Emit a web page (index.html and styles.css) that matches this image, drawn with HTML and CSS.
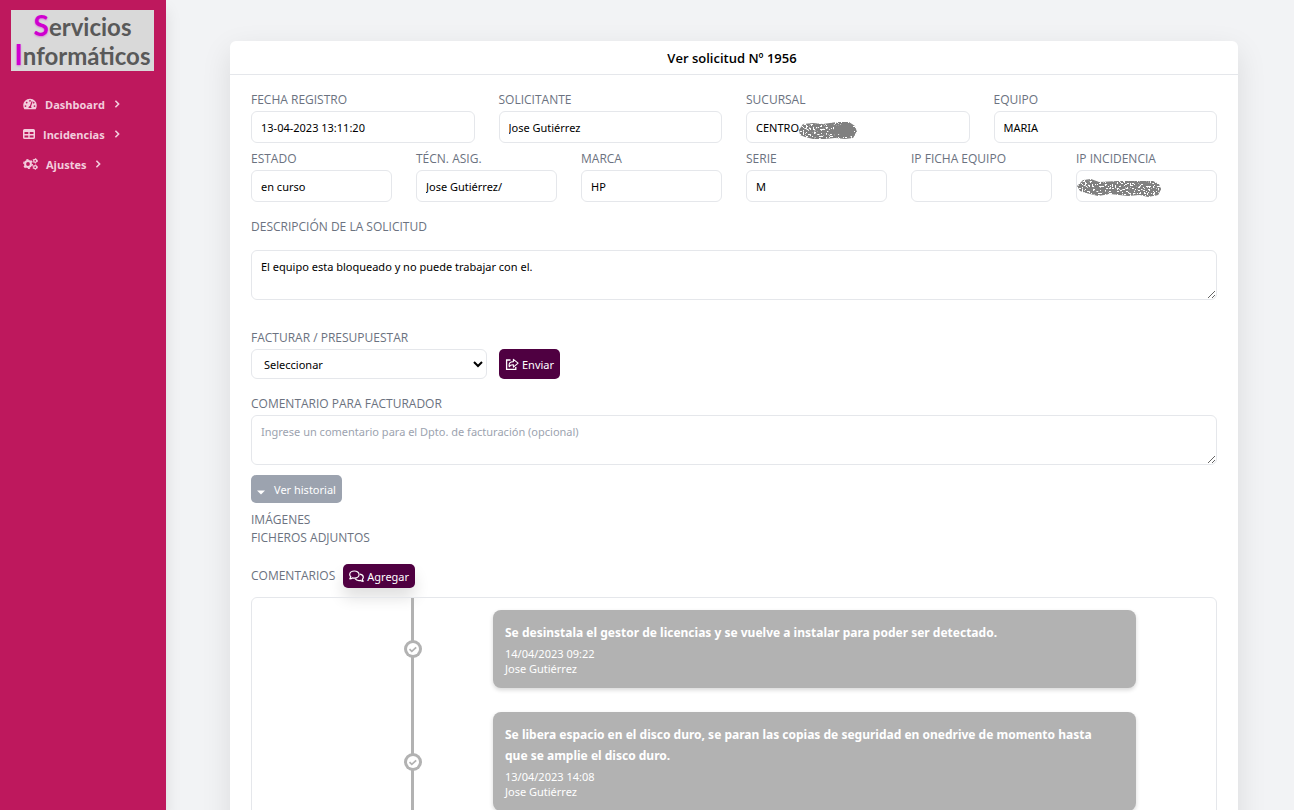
FILE: index.html
```html
<!DOCTYPE html>
<html lang="es">
<head>
<meta charset="utf-8">
<title>Ver solicitud Nº 1956</title>
<link rel="stylesheet" href="styles.css">
</head>
<body>
<div class="app">
  <aside class="sidebar">
    <div class="logo">
      <div class="logo-line"><span class="initial">S</span>ervicios</div>
      <div class="logo-line"><span class="initial">I</span>nformáticos</div>
    </div>
    <nav class="menu">
      <a class="menu-item" href="#">
        <svg class="icon-dash" viewBox="0 0 576 512" fill="currentColor"><path fill-rule="evenodd" d="M288 32C129 32 0 161 0 320c0 53 14 102 39 145 6 9 16 15 27 15h444c11 0 21-6 27-15 25-43 39-92 39-145C576 161 447 32 288 32zm0 50a38 38 0 1 1 0 76 38 38 0 0 1 0-76zM96 384a38 38 0 1 1 0-76 38 38 0 0 1 0 76zm50-150a38 38 0 1 1 0-76 38 38 0 0 1 0 76zm250-62l-66 188c20 14 26 36 18 66H228c-10-44 14-82 56-86l66-186c12-24 54-8 46 18zm36 62a38 38 0 0 1-24-8l22-64a38 38 0 1 1 2 72zm48 150a38 38 0 1 1 0-76 38 38 0 0 1 0 76z"/></svg>
        <span>Dashboard</span>
        <svg class="icon-next" viewBox="0 0 8 10" fill="none" stroke="currentColor" stroke-width="2"><path d="M2 1l4 4-4 4"/></svg>
      </a>
      <a class="menu-item" href="#">
        <svg class="icon-table" viewBox="0 0 12 12" fill="none" stroke="currentColor"><rect x=".75" y="1.75" width="10.5" height="8.5" rx=".8" stroke-width="1.5"/><path d="M1 3h10" stroke-width="2"/><path d="M1 6.8h10M6 3v7.5" stroke-width="1.4"/></svg>
        <span>Incidencias</span>
        <svg class="icon-next" viewBox="0 0 8 10" fill="none" stroke="currentColor" stroke-width="2"><path d="M2 1l4 4-4 4"/></svg>
      </a>
      <a class="menu-item" href="#">
        <svg class="icon-gears" viewBox="0 0 15 12" fill="none" stroke="currentColor"><circle cx="5" cy="6" r="2.9" stroke-width="2"/><circle cx="5" cy="6" r="4.3" stroke-width="1.4" stroke-dasharray="2.2 2.3"/><circle cx="12.2" cy="2.8" r="1.5" stroke-width="1.3"/><circle cx="12.2" cy="2.8" r="2.3" stroke-width=".9" stroke-dasharray="1.2 1.2"/><circle cx="12.2" cy="9.2" r="1.5" stroke-width="1.3"/><circle cx="12.2" cy="9.2" r="2.3" stroke-width=".9" stroke-dasharray="1.2 1.2"/></svg>
        <span>Ajustes</span>
        <svg class="icon-next" viewBox="0 0 8 10" fill="none" stroke="currentColor" stroke-width="2"><path d="M2 1l4 4-4 4"/></svg>
      </a>
    </nav>
  </aside>

  <main class="content">
    <section class="panel">
      <h1 class="panel-title">Ver solicitud Nº 1956</h1>
      <div class="panel-body">
        <div class="row four">
          <div class="field"><label for="fecha">FECHA REGISTRO</label><input id="fecha" type="text" value="13-04-2023 13:11:20"></div>
          <div class="field"><label for="solicitante">SOLICITANTE</label><input id="solicitante" type="text" value="Jose Gutiérrez"></div>
          <div class="field"><label for="sucursal">SUCURSAL</label><input id="sucursal" type="text" value="CENTRO">
            <svg class="scribble scribble-branch" viewBox="0 0 60 19"><defs><filter id="grain" x="0" y="0" width="100%" height="100%" color-interpolation-filters="sRGB"><feTurbulence type="fractalNoise" baseFrequency=".6" numOctaves="2" seed="4"/><feColorMatrix values="0 0 0 0 .5  0 0 0 0 .5  0 0 0 0 .5  20 0 0 0 -7.6" result="n"/><feComposite in="n" in2="SourceGraphic" operator="in"/></filter></defs><path filter="url(#grain)" fill="#808080" d="M1 9l4-6 10-1 10 1 14-2 12 0 6 4 2 6-4 6-8 1-10-1-10 1-12 0-8-2-5-2z"/><path fill="#808080" d="M38 5l6-2 8 0 4 4 0 5-4 4-8 0-5-4-8 1-1-4 7-1z"/></svg>
          </div>
          <div class="field"><label for="equipo">EQUIPO</label><input id="equipo" type="text" value="MARIA"></div>
        </div>
        <div class="row six">
          <div class="field"><label for="estado">ESTADO</label><input id="estado" type="text" value="en curso"></div>
          <div class="field"><label for="tecnico">TÉCN. ASIG.</label><input id="tecnico" type="text" value="Jose Gutiérrez/"></div>
          <div class="field"><label for="marca">MARCA</label><input id="marca" type="text" value="HP"></div>
          <div class="field"><label for="serie">SERIE</label><input id="serie" type="text" value="M"></div>
          <div class="field"><label for="ipficha">IP FICHA EQUIPO</label><input id="ipficha" type="text" value=""></div>
          <div class="field"><label for="ipinc">IP INCIDENCIA</label><input id="ipinc" type="text" value="">
            <svg class="scribble scribble-ip" viewBox="0 0 85 19"><path filter="url(#grain)" fill="#808080" d="M0 8l6-6 8-1 8 3 18-1 20 0 16 0 6 3 2 5-3 6-10 2-8-2-12 1-18-2-12 2-12-3-6-2z"/><path filter="url(#grain)" fill="#808080" d="M84 11l-3 6-10 1-8-2-12 1-18-2-12 2-12-3-6-6 6-5 8 0 8 2 18-1 20 0 16 1z"/></svg>
          </div>
        </div>

        <div class="field description"><label for="desc">DESCRIPCIÓN DE LA SOLICITUD</label><textarea id="desc">El equipo esta bloqueado y no puede trabajar con el.</textarea></div>

        <div class="field billing">
          <label for="facturar">FACTURAR / PRESUPUESTAR</label>
          <div class="billing-controls">
            <select id="facturar"><option>Seleccionar</option></select>
            <button class="btn btn-send" type="button">
              <svg class="icon-share" viewBox="0 0 14 13" fill="none" stroke="currentColor"><path d="M5.500 2H1.600v9.400h9.200V9" stroke-width="1.300"/><path d="M4.300 8.800C3.500 5.500 5 3.600 8.400 3.600V1.300l4.700 3.900-4.700 3.900V6.700C6.400 6.600 5 7 4.300 8.800z" stroke-width="1.100" stroke-linejoin="round"/></svg>
              <span>Enviar</span>
            </button>
          </div>
        </div>

        <div class="field"><label for="coment">COMENTARIO PARA FACTURADOR</label><textarea id="coment" placeholder="Ingrese un comentario para el Dpto. de facturación (opcional)"></textarea></div>

        <button class="btn btn-history" type="button">
          <svg class="icon-caret" viewBox="0 0 8 5" fill="currentColor"><path d="M0 .5h8L4 4.500z"/></svg>
          <span>Ver historial</span>
        </button>
        <h2 class="heading">IMÁGENES</h2>
        <h2 class="heading">FICHEROS ADJUNTOS</h2>

        <div class="comments-head">
          <h2 class="heading">COMENTARIOS</h2>
          <button class="btn btn-add" type="button">
            <svg class="icon-chat" viewBox="0 0 15 12" fill="none" stroke="currentColor" stroke-width="1.200" stroke-linejoin="round"><path d="M5.400 1C2.800 1 .7 2.500.7 4.500c0 .9.400 1.700 1.100 2.300L.8 8.800c1.100 0 2-.4 2.700-.9.600.1 1.200.2 1.900.2 2.600 0 4.700-1.600 4.700-3.600S8 1 5.400 1z"/><path d="M11 4.200c1.900.4 3.300 1.600 3.300 3.100 0 .8-.4 1.500-1 2.100l.9 1.900c-1.100 0-1.900-.4-2.600-.9-2 .4-4.400 0-5.500-1.700"/></svg>
            <span>Agregar</span>
          </button>
        </div>

        <div class="timeline">
          <div class="marker"><svg class="dot" viewBox="0 0 18 18"><circle cx="9" cy="9" r="9" fill="#b2b2b2"/><circle cx="9" cy="9" r="6" fill="#fff"/><path d="M5.500 9.200l2.300 2.200 4.400-4.100" fill="none" stroke="#b2b2b2" stroke-width="1.700"/></svg></div>
          <article class="comment">
            <h3>Se desinstala el gestor de licencias y se vuelve a instalar para poder ser detectado.</h3>
            <p>14/04/2023 09:22</p><p>Jose Gutiérrez</p>
          </article>
          <div class="marker"><svg class="dot" viewBox="0 0 18 18"><circle cx="9" cy="9" r="9" fill="#b2b2b2"/><circle cx="9" cy="9" r="6" fill="#fff"/><path d="M5.500 9.200l2.300 2.200 4.400-4.100" fill="none" stroke="#b2b2b2" stroke-width="1.700"/></svg></div>
          <article class="comment">
            <h3>Se libera espacio en el disco duro, se paran las copias de seguridad en onedrive de momento hasta que se amplie el disco duro.</h3>
            <p>13/04/2023 14:08</p><p>Jose Gutiérrez</p>
          </article>
        </div>
      </div>
    </section>
  </main>
</div>
</body>
</html>
```
FILE: styles.css
```css
*, *::before { box-sizing: border-box; }
body, h1, h2, h3, p { margin: 0; }
body, input, textarea, select, button {
  font-family: "Noto Sans", "Open Sans", sans-serif;
  font-size: 11px;
}
body { color: #000; background: #f2f3f5; }
.app { display: flex; height: 100vh; }

.sidebar { flex: none; width: 166px; padding: 10px 12px 0 11px; background: #be185d; box-shadow: 0 10px 15px rgba(0, 0, 0, .1); }
.logo { display: flex; flex-direction: column; justify-content: center; height: 61px; padding-bottom: 2px; background: #d9d9d9; text-align: center; color: #595959; font-family: Lato, "Open Sans", sans-serif; font-weight: 700; font-size: 24px; white-space: nowrap; }
.logo-line { height: 29px; line-height: 29px; }
.initial { color: #cf00cf; font-size: 28px; text-shadow: 0 1px 2px rgba(207, 0, 207, .4); }
.menu { display: flex; flex-direction: column; margin-top: 18px; padding-left: 12px; }
.menu-item { display: flex; align-items: center; height: 30px; color: #f3cddd; font-family: "Open Sans", sans-serif; font-weight: 700; font-size: 11px; text-decoration: none; gap: 8px; }
.icon-dash { width: 14px; height: 12px; }
.icon-table { width: 12px; height: 12px; }
.icon-gears { width: 15px; height: 12px; }
.icon-next { width: 8px; height: 8px; }

.content { flex: 1; min-width: 0; padding: 41px 56px 0 64px; overflow-y: auto; scrollbar-width: none; }
.panel { background: #fff; border-radius: 6px; box-shadow: 0 10px 30px rgba(0, 0, 0, .1); }
.panel-title { height: 34px; padding-right: 4px; border-bottom: 1px solid #e5e7eb; text-align: center; font-family: "Open Sans", sans-serif; font-size: 13px; font-weight: 600; line-height: 34px; }
.panel-body { padding: 16px 21px 24px; }

.row { display: grid; gap: 24px; margin-bottom: 7px; }
.four { grid-template-columns: repeat(4, 1fr); }
.six { grid-template-columns: repeat(6, 1fr); }
.field { position: relative; display: flex; flex-direction: column; gap: 2px; min-width: 0; }
label, .heading { color: #6b7280; font-family: "Open Sans", sans-serif; font-size: 12px; font-weight: 500; line-height: 18px; }
input, textarea, select { width: 100%; color: #000; background: #fff; border: 1px solid #e5e7eb; border-radius: 6px; outline: 0; }
input { height: 32px; padding: 0 9px; }
textarea { display: block; height: 50px; padding: 8px 9px; line-height: 16px; resize: vertical; }
textarea::placeholder { color: #9ca3af; }
.scribble { position: absolute; }
.scribble-branch { left: 52px; top: 30px; width: 60px; height: 19px; }
.scribble-ip { left: 1px; top: 28px; width: 85px; height: 19px; }
.description { gap: 14px; margin-top: 16px; }
.billing { margin: 29px 0 16px; }
.billing-controls { display: flex; gap: 12px; }
select { width: 236px; height: 30px; padding: 0 8px; }

.btn { display: flex; align-items: center; border: 0; border-radius: 5px; color: #fff; background: #4f0041; padding: 0 6px; gap: 3px; white-space: nowrap; }
.btn-send { height: 30px; }
.icon-share { width: 14px; height: 13px; }
.btn-history { height: 28px; margin: 10px 0 8px; background: #9ca3af; gap: 9px; }
.icon-caret { width: 8px; height: 5px; margin-top: 6px; }
.comments-head { display: flex; align-items: center; gap: 8px; margin: 17px 0 9px; }
.btn-add { height: 24px; box-shadow: 0 10px 15px rgba(0, 0, 0, .12); }
.icon-chat { width: 15px; height: 12px; }

.timeline { position: relative; display: grid; grid-template-columns: repeat(12, 1fr); row-gap: 24px; padding: 12px 0; border: 1px solid #e5e7eb; border-radius: 6px; }
.timeline::before { content: ""; position: absolute; top: 0; bottom: 0; left: calc(100% / 6 - 2px); width: 3px; background: #b2b2b2; }
.marker { position: relative; grid-column: 2 / 4; display: flex; align-items: center; justify-content: center; }
.dot { width: 18px; height: 18px; }
.comment { grid-column: 4 / 12; padding: 12px 20px 12px 12px; border-radius: 8px; color: #fff; background: #b2b2b2; box-shadow: 0 2px 4px rgba(0, 0, 0, .16); }
.comment h3 { margin-bottom: 3px; font-size: 12px; font-weight: 700; line-height: 21px; }
.comment p { line-height: 15px; }
```
